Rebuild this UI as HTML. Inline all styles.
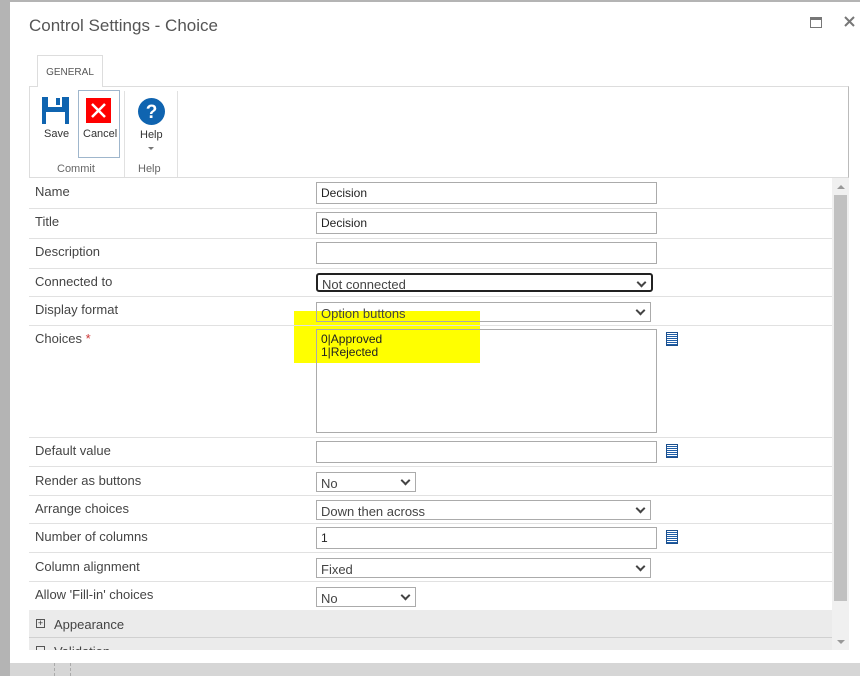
<!DOCTYPE html>
<html><head><style>
*{box-sizing:border-box;margin:0;padding:0}
body{width:860px;height:676px;background:#d6d6d6;position:relative;overflow:hidden;font-family:"Liberation Sans",sans-serif;color:#333}
.a{position:absolute}
.dlg{left:10px;top:2px;width:850px;height:661px;background:#fff}
.lbl{position:absolute;left:35px;font-size:13px;color:#444}
.hr{position:absolute;left:29px;width:803px;height:1px;background:#e1e1e1}
.in{position:absolute;left:316px;width:341px;height:22px;border:1px solid #ababab;background:#fff;font-size:12px;padding:3px 4px;color:#222}
.sel{position:absolute;left:316px;height:20px;border:1px solid #ababab;background:#fff;font-size:13px;padding:3px 4px 0;color:#444}
.sel:after{content:"";position:absolute;right:6px;top:4px;width:5px;height:5px;border-right:2px solid #444;border-bottom:2px solid #444;transform:rotate(45deg)}
.ico{position:absolute;left:666px;width:12px;height:14px;border:1px solid #1c4f8c;background:repeating-linear-gradient(#fff 0 1px,#1e5ea8 1px 2px)}
</style></head><body>
<div class="a" style="left:0;top:0;width:10px;height:676px;background:#b4b4b4"></div>
<div class="a" style="left:0;top:0;width:860px;height:2px;background:#b4b4b4"></div>
<div class="a dlg"></div>
<div class="a" style="left:29px;top:16px;font-size:17px;color:#555">Control Settings - Choice</div>
<div class="a" style="left:810px;top:17px;width:12px;height:11px;border:1.5px solid #777;border-top-width:3px"></div>
<svg class="a" style="left:844px;top:16px" width="11" height="11"><path d="M1 1L10 10M10 1L1 10" stroke="#777" stroke-width="2"/></svg>
<div class="a" style="left:37px;top:55px;width:66px;height:32px;border:1px solid #ddd;border-bottom:none;background:#fff;font-size:10px;color:#555;text-align:center;padding-top:11px;z-index:2">GENERAL</div>
<div class="a" style="left:29px;top:86px;width:820px;height:92px;border:1px solid #ddd;border-right-color:#bbb"></div>
<div class="a" style="left:124px;top:91px;width:1px;height:86px;background:#e1e1e1"></div>
<div class="a" style="left:177px;top:91px;width:1px;height:86px;background:#e1e1e1"></div>
<svg class="a" style="left:42px;top:97px" width="27" height="27"><rect width="27" height="27" fill="#0f64b0"/><rect x="6" y="0" width="14" height="10" fill="#fff"/><rect x="14" y="1" width="4" height="7" fill="#0f64b0"/><rect x="4" y="15" width="19" height="12" fill="#fff"/></svg>
<div class="a" style="left:44px;top:128px;font-size:11px;color:#333">Save</div>
<div class="a" style="left:78px;top:90px;width:42px;height:68px;border:1px solid #9fb6cc"></div>
<svg class="a" style="left:86px;top:98px" width="25" height="25"><rect width="25" height="25" fill="#f00"/><path d="M6 6L19 19M19 6L6 19" stroke="#fff" stroke-width="2.5"/></svg>
<div class="a" style="left:83px;top:128px;font-size:11px;color:#333">Cancel</div>
<svg class="a" style="left:138px;top:98px" width="27" height="27"><circle cx="13.5" cy="13.5" r="13.5" fill="#0f64b0"/><text x="13.5" y="20" font-size="19" font-weight="bold" fill="#fff" text-anchor="middle" font-family="Liberation Sans">?</text></svg>
<div class="a" style="left:140px;top:129px;font-size:11px;color:#333">Help</div>
<div class="a" style="left:148px;top:147px;border:3px solid transparent;border-top:3px solid #777"></div>
<div class="a" style="left:57px;top:163px;font-size:11px;color:#666">Commit</div>
<div class="a" style="left:138px;top:163px;font-size:11px;color:#666">Help</div>
<div class="a" style="left:832px;top:178px;width:17px;height:472px;background:#f0f0f0"></div>
<div class="a" style="left:834px;top:195px;width:13px;height:406px;background:#c1c1c1"></div>
<div class="a" style="left:837px;top:185px;border:4px solid transparent;border-bottom:4px solid #999;border-top:0"></div>
<div class="a" style="left:837px;top:640px;border:4px solid transparent;border-top:4px solid #999;border-bottom:0"></div>
<div class="lbl" style="top:184px">Name</div><div class="in" style="top:182px">Decision</div><div class="hr" style="top:208px"></div>
<div class="lbl" style="top:214px">Title</div><div class="in" style="top:212px">Decision</div><div class="hr" style="top:238px"></div>
<div class="lbl" style="top:244px">Description</div><div class="in" style="top:242px"></div><div class="hr" style="top:268px"></div>
<div class="lbl" style="top:274px">Connected to</div><div class="sel" style="top:273px;width:337px;height:19px;border:2px solid #222;border-radius:3px;padding-top:2px">Not connected</div><div class="hr" style="top:296px"></div>
<div class="lbl" style="top:302px">Display format</div>
<div class="a" style="left:294px;top:311px;width:186px;height:52px;background:#ffff00"></div>
<div class="sel" style="top:302px;width:335px;background:transparent">Option buttons</div><div class="hr" style="top:325px"></div>
<div class="lbl" style="top:331px">Choices <span style="color:#c33">*</span></div>
<div class="a" style="left:316px;top:329px;width:341px;height:104px;border:1px solid #ababab;font-size:12px;padding:3px 4px;line-height:13px;color:#222">0|Approved<br>1|Rejected</div>
<div class="ico" style="top:332px"></div>
<div class="hr" style="top:437px"></div>
<div class="lbl" style="top:443px">Default value</div><div class="in" style="top:441px"></div><div class="ico" style="top:444px"></div><div class="hr" style="top:466px"></div>
<div class="lbl" style="top:473px">Render as buttons</div><div class="sel" style="top:472px;width:100px">No</div><div class="hr" style="top:495px"></div>
<div class="lbl" style="top:501px">Arrange choices</div><div class="sel" style="top:500px;width:335px">Down then across</div><div class="hr" style="top:523px"></div>
<div class="lbl" style="top:529px">Number of columns</div><div class="in" style="top:527px">1</div><div class="ico" style="top:530px"></div><div class="hr" style="top:552px"></div>
<div class="lbl" style="top:559px">Column alignment</div><div class="sel" style="top:558px;width:335px">Fixed</div><div class="hr" style="top:581px"></div>
<div class="lbl" style="top:587px">Allow 'Fill-in' choices</div><div class="sel" style="top:587px;width:100px">No</div>
<div class="a" style="left:29px;top:610px;width:803px;height:40px;background:#ebebeb;overflow:hidden">
<div class="a" style="left:0;top:27px;width:803px;height:1px;background:#d0d0d0"></div>
<div class="a" style="left:7px;top:9px;width:9px;height:9px;border:1px solid #555;font-size:9px;line-height:7px;text-align:center;color:#333">+</div>
<div class="a" style="left:25px;top:7px;font-size:13px;color:#444">Appearance</div>
<div class="a" style="left:7px;top:36px;width:9px;height:9px;border:1px solid #555"></div>
<div class="a" style="left:25px;top:34px;font-size:13px;color:#444">Validation</div>
</div>
<div class="a" style="left:10px;top:650px;width:850px;height:13px;background:#fff"></div>
<div class="a" style="left:54px;top:663px;width:1px;height:13px;border-left:1px dashed #aaa"></div>
<div class="a" style="left:70px;top:663px;width:1px;height:13px;border-left:1px dashed #aaa"></div>
</body></html>
